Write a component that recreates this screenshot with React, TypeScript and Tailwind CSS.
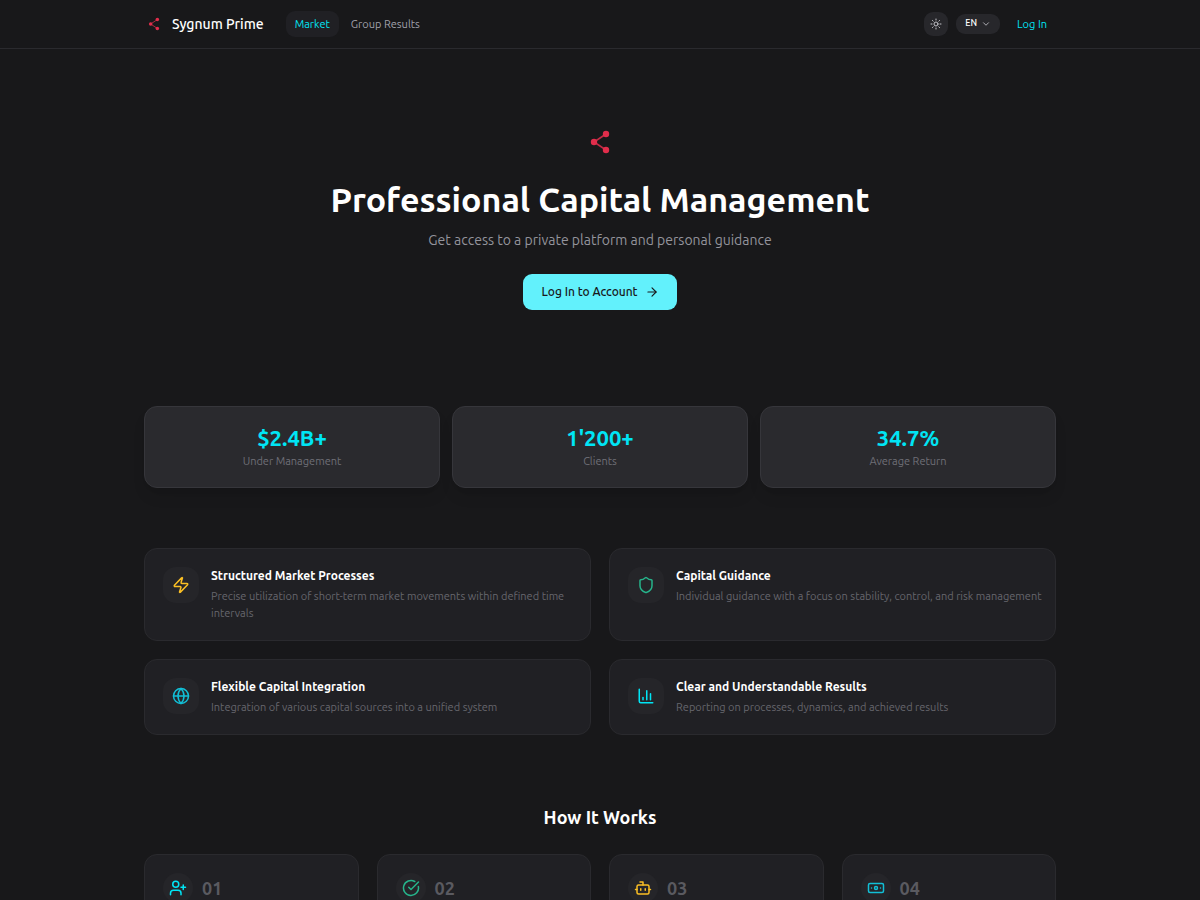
import {
    ArrowRight,
    Banknote,
    Bot,
    ChartColumn,
    ChevronDown,
    CircleCheckBig,
    Globe,
    LucideIcon,
    Shield,
    Sun,
    UserPlus,
    Zap,
} from 'lucide-react';

const stats = [
    { value: '$2.4B+', label: 'Under Management' },
    { value: "1'200+", label: 'Clients' },
    { value: '34.7%', label: 'Average Return' },
];

interface Feature {
    title: string;
    text: string;
    icon: LucideIcon;
    color: string;
}

const features: Feature[] = [
    {
        title: 'Structured Market Processes',
        text: 'Precise utilization of short-term market movements within defined time intervals',
        icon: Zap,
        color: 'text-[#fbbf24]',
    },
    {
        title: 'Capital Guidance',
        text: 'Individual guidance with a focus on stability, control, and risk management',
        icon: Shield,
        color: 'text-[#26b48b]',
    },
    {
        title: 'Flexible Capital Integration',
        text: 'Integration of various capital sources into a unified system',
        icon: Globe,
        color: 'text-[#12bfd6]',
    },
    {
        title: 'Clear and Understandable Results',
        text: 'Reporting on processes, dynamics, and achieved results',
        icon: ChartColumn,
        color: 'text-[#00e5f5]',
    },
];

const steps = [
    { number: '01', icon: UserPlus, color: 'text-[#00e5f5]' },
    { number: '02', icon: CircleCheckBig, color: 'text-[#26b48b]' },
    { number: '03', icon: Bot, color: 'text-[#fbbf24]' },
    { number: '04', icon: Banknote, color: 'text-[#12bfd6]' },
];

function Logo({ size }: { size: number }) {
    return (
        <svg width={size} height={size} viewBox="0 0 36 36" fill="none" aria-hidden="true">
            <path d="M24 10 12 18l12 8" stroke="#c02c44" strokeWidth="1.6" />
            <circle cx="24" cy="10" r="3.2" fill="#e12d4b" />
            <circle cx="12" cy="18" r="3.2" fill="#e12d4b" />
            <circle cx="24" cy="26" r="3.2" fill="#e12d4b" />
        </svg>
    );
}

function Header() {
    return (
        <header className="border-b border-[#2a2a2e]">
            <div className="mx-auto flex h-12 max-w-[912px] items-center justify-between">
                <div className="flex items-center">
                    <a href="#" className="flex items-center gap-2 text-sm font-medium text-white">
                        <Logo size={20} />
                        Sygnum Prime
                    </a>
                    <nav className="ml-[22px] flex items-center gap-[3px] text-[11px]">
                        <a href="#market" className="rounded-[9px] bg-[#202024] px-[9px] py-[5px] text-[#00e5f5]">
                            Market
                        </a>
                        <a href="#results" className="px-[9px] py-[5px] text-[#a1a1aa]">
                            Group Results
                        </a>
                    </nav>
                </div>
                <div className="flex items-center gap-2">
                    <button
                        aria-label="Toggle theme"
                        className="flex h-6 w-6 items-center justify-center rounded-[9px] bg-[#27272b] text-[#c4c4ca]"
                    >
                        <Sun size={12} />
                    </button>
                    <button className="flex h-5 items-center gap-1 rounded-[9px] bg-[#27272b] px-[9px] text-[9px] font-medium text-white">
                        EN
                        <ChevronDown size={10} className="text-[#c4c4ca]" />
                    </button>
                    <a href="#login" className="px-[9px] text-[11px] text-[#00e5f5]">
                        Log In
                    </a>
                </div>
            </div>
        </header>
    );
}

function Hero() {
    return (
        <section className="flex flex-col items-center pt-[75px] text-center">
            <Logo size={36} />
            <h1 className="mt-[18px] text-[34px] leading-[43px] font-semibold text-white">
                Professional Capital Management
            </h1>
            <p className="mt-[9px] text-sm leading-5 text-[#94949c]">
                Get access to a private platform and personal guidance
            </p>
            <button className="mt-6 flex h-9 items-center gap-[7px] rounded-[9px] bg-[#62f1fc] px-[18px] text-xs font-medium text-[#18181b]">
                Log In to Account
                <ArrowRight size={14} />
            </button>
        </section>
    );
}

function Stats() {
    return (
        <section className="mt-24 grid grid-cols-3 gap-3">
            {stats.map((stat) => (
                <div
                    key={stat.label}
                    className="rounded-[13px] border border-[#36363b] bg-[#2a2a2e] py-[18px] text-center shadow-lg"
                >
                    <p className="text-[22px] leading-[26px] font-bold text-[#00e5f5]">{stat.value}</p>
                    <p className="mt-[3px] text-[11px] leading-[15px] text-[#6f6f77]">{stat.label}</p>
                </div>
            ))}
        </section>
    );
}

function FeatureCard({ title, text, icon: Icon, color }: Feature) {
    return (
        <article className="flex gap-3 rounded-[13px] border border-[#2a2a2e] bg-[#202024] py-[18px] pr-[9px] pl-[18px]">
            <div className="flex h-9 w-9 shrink-0 items-center justify-center rounded-[13px] bg-[#252529]">
                <Icon size={18} className={color} />
            </div>
            <div>
                <h3 className="text-xs leading-[18px] font-semibold text-white">{title}</h3>
                <p className="mt-[3px] text-[11px] leading-[17px] text-[#66666d]">{text}</p>
            </div>
        </article>
    );
}

function Steps() {
    return (
        <section className="mt-[69px]">
            <h2 className="text-center text-lg leading-[26px] font-semibold text-white">How It Works</h2>
            <div className="mt-6 grid grid-cols-4 gap-[18px]">
                {steps.map(({ number, icon: Icon, color }) => (
                    <article
                        key={number}
                        className="flex items-center gap-[9px] rounded-[13px] border border-[#2a2a2e] bg-[#202024] px-[18px] pt-[18px] pb-24"
                    >
                        <div className="flex h-[30px] w-[30px] items-center justify-center rounded-full bg-[#252529]">
                            <Icon size={18} className={color} />
                        </div>
                        <span className="text-lg leading-6 font-semibold text-[#5a5a60]">{number}</span>
                    </article>
                ))}
            </div>
        </section>
    );
}

export default function App() {
    return (
        <div className="h-screen overflow-hidden bg-[#18181a] font-['Ubuntu','Noto_Sans',sans-serif]">
            <Header />
            <main className="mx-auto max-w-[912px]">
                <Hero />
                <Stats />
                <section className="mt-[60px] grid grid-cols-2 gap-[18px]">
                    {features.map((feature) => (
                        <FeatureCard key={feature.title} {...feature} />
                    ))}
                </section>
                <Steps />
            </main>
        </div>
    );
}
